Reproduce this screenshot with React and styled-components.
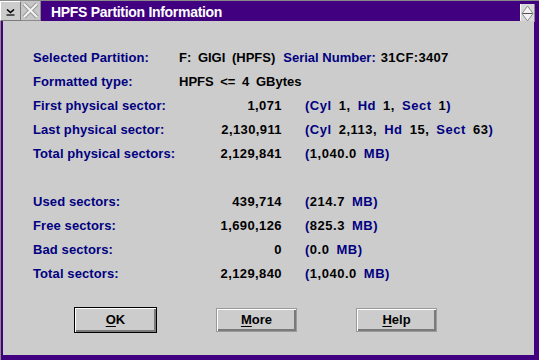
import React from 'react';
import styled, { createGlobalStyle } from 'styled-components';

const purple = '#400080';
const navy = '#000080';
const face = '#cccccc';

const GlobalStyle = createGlobalStyle`
  html, body {
    margin: 0;
    padding: 0;
    background: ${purple};
  }
  body {
    font-family: "Liberation Sans", Arial, sans-serif;
  }
`;

const physical = [
  { label: 'First physical sector:', value: '1,071', detail: '(Cyl 1, Hd 1, Sect 1)' },
  { label: 'Last physical sector:', value: '2,130,911', detail: '(Cyl 2,113, Hd 15, Sect 63)' },
  { label: 'Total physical sectors:', value: '2,129,841', detail: '(1,040.0 MB)' },
];

const usage = [
  { label: 'Used sectors:', value: '439,714', detail: '(214.7 MB)' },
  { label: 'Free sectors:', value: '1,690,126', detail: '(825.3 MB)' },
  { label: 'Bad sectors:', value: '0', detail: '(0.0 MB)' },
  { label: 'Total sectors:', value: '2,129,840', detail: '(1,040.0 MB)' },
];

// numbers in black, words and brackets in blue
const Detail = ({ text }) => (
  <DetailCell>
    {text.split(/(\d[\d,.]*)/).map((part, i) =>
      i % 2 ? <Plain key={i}>{part}</Plain> : <Accent key={i}>{part}</Accent>
    )}
  </DetailCell>
);

const InfoRow = ({ label, value, detail }) => (
  <Row>
    <Label>{label}</Label>
    <Number>{value}</Number>
    <Detail text={detail} />
  </Row>
);

const App = () => {
  return (
    <>
      <GlobalStyle />
      <Window>
        <TitleBar>
          <SysButton>
            <svg width="9" height="7" viewBox="0 0 9 7">
              <polyline points="1,0.5 4.5,3.5 8,0.5" fill="none" stroke="#000" strokeWidth="1.6" />
              <line x1="0.5" y1="6" x2="8.5" y2="6" stroke="#000" strokeWidth="1.2" />
            </svg>
          </SysButton>
          <CloseButton>
            <svg width="19" height="19" viewBox="0 0 19 19">
              <line x1="3" y1="3" x2="16" y2="16" stroke="#9a9a9a" strokeWidth="4" />
              <line x1="16" y1="3" x2="3" y2="16" stroke="#9a9a9a" strokeWidth="4" />
              <line x1="3" y1="3" x2="16" y2="16" stroke="#f4f4f4" strokeWidth="2" />
              <line x1="16" y1="3" x2="3" y2="16" stroke="#f4f4f4" strokeWidth="2" />
            </svg>
          </CloseButton>
          <Title>HPFS Partition Information</Title>
          <RestoreButton>
            <svg width="13" height="17" viewBox="0 0 13 17">
              <polygon points="6.5,1 12,8.5 6.5,16 1,8.5" fill="#f2f2f2" stroke="#8c8c8c" strokeWidth="1" />
              <line x1="1.5" y1="8.5" x2="11.5" y2="8.5" stroke="#505050" strokeWidth="1" />
            </svg>
          </RestoreButton>
        </TitleBar>
        <Body>
          <Row>
            <Label>Selected Partition:</Label>
            <Wide>
              <Plain>F: GIGI (HPFS)</Plain>
              <Serial>Serial Number:</Serial>
              <SerialValue>31CF:3407</SerialValue>
            </Wide>
          </Row>
          <Row>
            <Label>Formatted type:</Label>
            <Wide>
              <Plain>HPFS &lt;= 4 GBytes</Plain>
            </Wide>
          </Row>
          {physical.map((item) => (
            <InfoRow key={item.label} {...item} />
          ))}
          <Spacer />
          {usage.map((item) => (
            <InfoRow key={item.label} {...item} />
          ))}
          <ButtonRow>
            <PushButton $default>
              <Mnemonic>O</Mnemonic>K
            </PushButton>
            <PushButton>
              <Mnemonic>M</Mnemonic>ore
            </PushButton>
            <PushButton>
              <Mnemonic>H</Mnemonic>elp
            </PushButton>
          </ButtonRow>
        </Body>
      </Window>
    </>
  );
};

export default App;

const Window = styled.div`
  width: 539px;
  height: 360px;
  box-sizing: border-box;
  border-top: 1px solid #8a8a8a;
  border-left: 1px solid #8a8a8a;
  background: ${purple};
  display: flex;
  flex-direction: column;
`;

const TitleBar = styled.div`
  height: 20px;
  display: flex;
  align-items: flex-start;
  padding-right: 4px;
  margin-left: -1px;
`;

const FrameButton = styled.div`
  box-sizing: border-box;
  display: flex;
  align-items: center;
  justify-content: center;
`;

const SysButton = styled(FrameButton)`
  width: 21px;
  height: 20px;
  background: ${face};
  border-top: 1px solid #fff;
  border-left: 1px solid #fff;
  border-right: 1px solid #7a7a7a;
  border-bottom: 1px solid #7a7a7a;
  padding-top: 2px;
`;

const CloseButton = styled(FrameButton)`
  width: 20px;
  height: 20px;
  background: #c6c6c6;
  border-right: 1px solid #8a8a8a;
  border-bottom: 1px solid #8a8a8a;
`;

const RestoreButton = styled(FrameButton)`
  width: 15px;
  height: 18px;
  margin-top: 3px;
  background: #d8d8d8;
  border-right: 1px solid #8a8a8a;
  border-left: 1px solid #fff;
`;

const Title = styled.div`
  flex: 1;
  margin-left: 10px;
  padding-top: 1px;
  color: #fff;
  font-weight: 700;
  font-size: 14px;
  line-height: 20px;
  letter-spacing: -0.3px;
  white-space: nowrap;
`;

const Body = styled.div`
  flex: 1;
  margin: 0 5px 5px 2px;
  padding: 25px 0 0 30px;
  background: ${face};
  font-weight: 700;
  font-size: 13px;
`;

const Row = styled.div`
  display: grid;
  grid-template-columns: 146px 103px 1fr;
  height: 24px;
  line-height: 24px;
  white-space: pre;
`;

const Label = styled.div`
  color: ${navy};
  letter-spacing: 0.1px;
`;

const Number = styled.div`
  color: #000;
  text-align: right;
  letter-spacing: 0.4px;
`;

const DetailCell = styled.div`
  padding-left: 23px;
  letter-spacing: 0.5px;
  word-spacing: 3px;
`;

const Wide = styled.div`
  grid-column: 2 / 4;
  word-spacing: 3px;
`;

const Accent = styled.span`
  color: ${navy};
`;

const Plain = styled.span`
  color: #000;
`;

const Serial = styled.span`
  color: ${navy};
  margin-left: 8px;
  word-spacing: 0;
`;

const SerialValue = styled.span`
  color: #000;
  margin-left: 5px;
  letter-spacing: 0.3px;
`;

const Spacer = styled.div`
  height: 24px;
`;

const ButtonRow = styled.div`
  display: flex;
  align-items: center;
  gap: 59px;
  height: 26px;
  margin-top: 21px;
  padding-left: 41px;
`;

const PushButton = styled.div`
  box-sizing: border-box;
  width: ${(p) => (p.$default ? '83px' : '81px')};
  height: ${(p) => (p.$default ? '26px' : '24px')};
  border: 1px solid ${(p) => (p.$default ? '#000' : '#9a9a9a')};
  background: ${face};
  box-shadow: inset 1px 1px 0 #fff, inset -2px -2px 0 #7a7a7a;
  display: flex;
  align-items: center;
  justify-content: center;
  color: #000;
  font-weight: 700;
  font-size: 13px;
  padding-bottom: 1px;
`;

const Mnemonic = styled.span`
  text-decoration: underline;
  text-underline-offset: 2px;
`;
